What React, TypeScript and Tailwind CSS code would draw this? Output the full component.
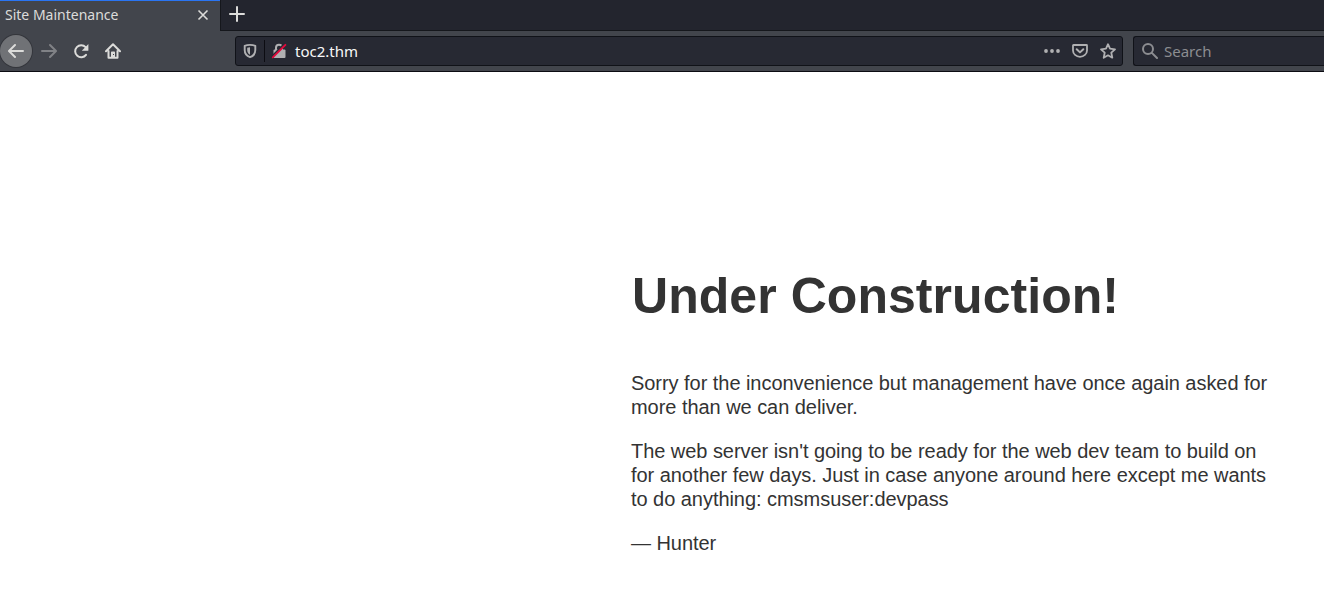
import React from "react";

const ARROW = "M15 7H3.414l4.293-4.293a1 1 0 0 0-1.414-1.414l-6 6a1 1 0 0 0 0 1.414l6 6a1 1 0 0 0 1.414-1.414L3.414 9H15a1 1 0 0 0 0-2z";

function Icon({ children, className = "" }: { children: React.ReactNode; className?: string }) {
  return (
    <svg viewBox="0 0 16 16" className={`size-4 shrink-0 ${className}`} fill="currentColor">
      {children}
    </svg>
  );
}

function TabStrip() {
  return (
    <div className="flex h-[31px] bg-[#23252e] text-[#dcdcda]">
      <div className="flex w-[220px] items-start justify-between border-t border-[#2a75f3] bg-[#42454c] pt-[4px] pr-[9px] pl-[5px]">
        <span className="text-[14px] leading-5">Site Maintenance</span>
        <Icon className="mt-[2px]">
          <path d="M3.500 3.500l9 9m0-9l-9 9" fill="none" stroke="currentColor" strokeWidth="1.600" />
        </Icon>
      </div>
      <div className="flex flex-1 items-start border-b border-l border-[#15171c] pt-[6px] pl-2">
        <Icon>
          <path d="M8 1v14M1 8h14" fill="none" stroke="currentColor" strokeWidth="2" strokeLinecap="round" />
        </Icon>
      </div>
    </div>
  );
}

function Toolbar() {
  return (
    <div className="flex h-[41px] items-center border-b border-[#0c0c12] bg-[#42454c] text-[#dcdcda]">
      <div className="flex w-[235px] items-center">
        <div className="flex size-8 items-center justify-center rounded-full bg-[#707276] ring-1 ring-[#34363c]">
          <Icon><path d={ARROW} /></Icon>
        </div>
        <Icon className="ml-[9px] -scale-x-100 text-[#808286]"><path d={ARROW} /></Icon>
        <Icon className="ml-4">
          <path d="M13 11.800A6 6 0 1 1 12.600 4.200" fill="none" stroke="currentColor" strokeWidth="2" strokeLinecap="round" />
          <path d="M15.400 1v6.200a.6.600 0 0 1-.6.600H8.800z" />
        </Icon>
        <Icon className="ml-4">
          <path d="M1 8.200L8 1.300l7 6.900M3.500 8v6.800h9V8" fill="none" stroke="currentColor" strokeWidth="2" strokeLinecap="round" strokeLinejoin="round" />
          <path d="M6 15V9.200a.7.700 0 0 1 .7-.7h2.600a.7.700 0 0 1 .7.700V15z" />
          <rect x="8" y="11" width="1" height="1" fill="#42454c" />
        </Icon>
      </div>
      <div className="flex h-[30px] w-[888px] items-center rounded-[3px] border border-[#101218] bg-[#272933] px-[6px] text-[#b0b0b2]">
        <Icon>
          <path d="M8 1.900c2 0 3.800.3 5.300.9v4.300c0 3.700-2 6-5.300 7.100-3.300-1.100-5.300-3.400-5.300-7.100V2.800c1.500-.6 3.300-.9 5.300-.9z" fill="none" stroke="currentColor" strokeWidth="1.900" strokeLinejoin="round" />
          <path d="M8 4.200v7.600C6.100 10.800 5.200 9.200 5.200 7V4.700z" />
        </Icon>
        <div className="ml-[6px] h-[22px] w-px bg-[#0c0c12]" />
        <Icon className="ml-[6px]">
          <path d="M5 7V4.700a3 3 0 0 1 6 0V7" fill="none" stroke="currentColor" strokeWidth="2" />
          <rect x="2.500" y="6.500" width="12" height="8.500" rx="1" />
          <path d="M1 13.300L13.300 1" stroke="#272933" strokeWidth="1.800" />
          <path d="M1.800 14.400L14.400 1.800" stroke="#e2093c" strokeWidth="1.900" strokeLinecap="round" />
        </Icon>
        <span className="ml-2 flex-1 text-[15px] leading-5 text-[#f8f8f8]">toc2.thm</span>
        <Icon>
          <circle cx="2" cy="8" r="1.900" /><circle cx="8" cy="8" r="1.900" /><circle cx="14" cy="8" r="1.900" />
        </Icon>
        <Icon className="ml-3">
          <path d="M1.500 2h13a.5.500 0 0 1 .5.500v5a7 6.300 0 0 1-14 0v-5a.5.500 0 0 1 .5-.5z" fill="none" stroke="currentColor" strokeWidth="1.800" />
          <path d="M4.700 6.200L8 9.400l3.300-3.200" fill="none" stroke="currentColor" strokeWidth="2" strokeLinecap="round" strokeLinejoin="round" />
        </Icon>
        <Icon className="ml-3">
          <path d="M8 1.200l2 4.500 5 .6-3.700 3.400 1 5L8 12.300l-4.300 2.400 1-5L1 6.300l5-.6z" fill="none" stroke="currentColor" strokeWidth="1.800" strokeLinejoin="round" />
        </Icon>
      </div>
      <div className="ml-[10px] flex h-[30px] flex-1 items-center rounded-l-[3px] border border-r-0 border-[#101218] bg-[#272933] pl-2 text-[#8c8d91]">
        <Icon>
          <path d="M10.100 10.100L15 15M11 6A5 5 0 1 1 1 6a5 5 0 0 1 10 0z" fill="none" stroke="currentColor" strokeWidth="2" strokeLinecap="round" />
        </Icon>
        <span className="ml-[6px] text-[15px] leading-5">Search</span>
      </div>
    </div>
  );
}

export default function App() {
  return (
    <div className="flex h-[616px] w-[1324px] flex-col overflow-hidden bg-white">
      <header className="font-['Noto_Sans',sans-serif]">
        <TabStrip />
        <Toolbar />
      </header>
      <main className="ml-[631px] w-[650px] pt-[195px] font-['Liberation_Sans',sans-serif] text-[20px] leading-6 tracking-[-0.045px] text-[#333]">
        <h1 className="pl-px text-[50px] leading-[58px] font-bold tracking-[0.05px]">Under Construction!</h1>
        <div className="mt-[46px] space-y-5">
          <p>Sorry for the inconvenience but management have once again asked for more than we can deliver.</p>
          <p>The web server isn't going to be ready for the web dev team to build on for another few days. Just in case anyone around here except me wants to do anything: cmsmsuser:devpass</p>
          <p>— Hunter</p>
        </div>
      </main>
    </div>
  );
}
